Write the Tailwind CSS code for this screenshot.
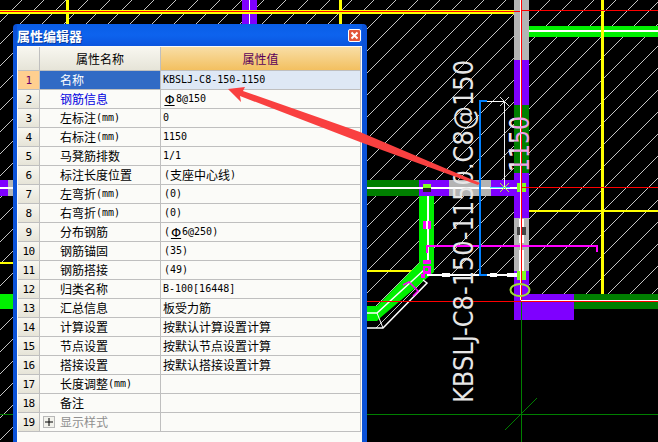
<!DOCTYPE html>
<html lang="zh-CN">
<head>
  <meta charset="UTF-8">
  <title>属性编辑器</title>
  <script src="https://cdn.jsdelivr.net/npm/@tailwindcss/browser@4"></script>
</head>
<body class="bg-black overflow-hidden">
<div class="relative w-[658px] h-[442px] overflow-hidden bg-black">

  <!-- cad drawing -->
  <svg class="absolute inset-0" width="658" height="442" viewBox="0 0 658 442">
    <defs>
      <pattern id="hatch" width="22" height="22" patternUnits="userSpaceOnUse">
        <path d="M-2 24 L24 -2" stroke="#c4c4c4" stroke-width="1" fill="none" shape-rendering="crispEdges"/>
      </pattern>
      <clipPath id="overBlack"><rect x="500" y="100" width="14" height="90"/></clipPath>
    </defs>
    <rect width="658" height="442" fill="#000"/>
    <rect width="658" height="442" fill="url(#hatch)"/>
    <polygon points="367,328 383,328 427,283 427,275 514,275 514,300 658,300 658,442 367,442" fill="#000"/>

    <!-- top left column behind dialog -->
    <rect x="242" y="0" width="15" height="24" fill="#7f00ff"/>
    <rect x="249" y="0" width="1" height="24" fill="#fff"/>
    <rect x="66" y="0" width="3" height="24" fill="#ff0"/>
    <rect x="339" y="0" width="3" height="24" fill="#ff0"/>

    <!-- left strip -->
    <rect x="0" y="180" width="13" height="16" fill="#7f00ff"/>
    <rect x="8" y="180" width="5" height="16" fill="#b4b4b4"/>
    <rect x="0" y="187" width="13" height="2" fill="#fff"/>
    <rect x="0" y="262" width="13" height="2" fill="#ff0"/>
    <rect x="0" y="294" width="13" height="15" fill="#00f000"/>
    <rect x="0" y="414" width="13" height="1" fill="#007f00"/>

    <!-- yellow and green grid -->
    <rect x="0" y="10" width="521" height="4" fill="#ff0"/>
    <rect x="601" y="0" width="3" height="300" fill="#ff0"/>
    <rect x="522" y="210" width="136" height="2" fill="#ff0"/>
    <rect x="367" y="270" width="54" height="2" fill="#ff0"/>
    <rect x="522" y="26" width="136" height="11" fill="#00f000"/>
    <rect x="522" y="30" width="136" height="2" fill="#fff"/>
    <rect x="601" y="26" width="3" height="11" fill="#ff0"/>

    <!-- vertical column -->
    <rect x="514" y="0" width="15" height="60" fill="#b4b4b4"/>
    <rect x="514" y="60" width="15" height="45" fill="#7f00ff"/>
    <rect x="514" y="105" width="15" height="68" fill="#007f00"/>
    <rect x="514" y="173" width="15" height="45" fill="#7f00ff"/>
    <rect x="514" y="218" width="15" height="53" fill="#b4b4b4"/>
    <rect x="514" y="271" width="15" height="23" fill="#7f00ff"/>
    <rect x="519" y="219" width="5" height="24" fill="#fff"/>
    <rect x="519" y="250" width="5" height="21" fill="#fff"/>
    <rect x="517" y="227" width="9" height="8" fill="#444"/>

    <!-- horizontal beam -->
    <rect x="367" y="180" width="52" height="16" fill="#007f00"/>
    <rect x="419" y="180" width="30" height="16" fill="#7f00ff"/>
    <rect x="449" y="180" width="42" height="16" fill="#b4b4b4"/>
    <rect x="491" y="180" width="23" height="16" fill="#7f00ff"/>
    <rect x="367" y="187" width="150" height="2" fill="#fff"/>
    <rect x="490" y="187" width="20" height="1" fill="#40e0ff"/>

    <!-- bottom beams -->
    <rect x="514" y="294" width="60" height="26" fill="#7f00ff"/>
    <rect x="574" y="294" width="84" height="15" fill="#007f00"/>
    <rect x="521" y="300" width="137" height="1" fill="#fff"/>

    <!-- bright green wall and diagonal -->
    <rect x="419" y="196" width="15" height="66" fill="#00f000"/>
    <rect x="427" y="196" width="2" height="76" fill="#fff"/>
    <polygon points="421,261 434,261 434,272 380,318 377,321 367,321 367,306 377,306" fill="#00f000"/>
    <polyline points="367,313 377,313 424,270" fill="none" stroke="#fff" stroke-width="1.5"/>
    <polyline points="367,328 383,328 427,283 423,280" fill="none" stroke="#fff" stroke-width="1.5"/>
    <line x1="377" y1="313" x2="383" y2="328" stroke="#fff"/>
    <polyline points="403,285 409,282 418,291 413,296" fill="none" stroke="#ff00ff" stroke-width="1.5"/>

    <!-- knots -->
    <rect x="423" y="184" width="8" height="4" fill="#7fff20"/>
    <rect x="423" y="188" width="8" height="4" fill="#222"/>
    <rect x="423" y="221" width="8" height="8" fill="#ff00ff"/>
    <rect x="426" y="221" width="2" height="8" fill="#fff"/>
    <rect x="423" y="260" width="8" height="4" fill="#ff00ff"/>
    <rect x="423" y="266" width="8" height="8" fill="#ff00ff"/>
    <rect x="425" y="268" width="3" height="3" fill="#00f000"/>
    <rect x="421" y="274" width="4" height="4" fill="#ff00ff"/>
    <rect x="517" y="183" width="9" height="9" fill="#7fff20"/>
    <rect x="517" y="271" width="9" height="9" fill="#7fff20"/>

    <!-- dimension and lines -->
    <polyline points="427,253 427,246 597,246 597,252" fill="none" stroke="#ff00ff" stroke-width="2"/>
    <rect x="427" y="274" width="90" height="2" fill="#fff"/>
    <rect x="442" y="273" width="8" height="4" fill="#fff"/>
    <rect x="490" y="273" width="7" height="4" fill="#fff"/>
    <rect x="507" y="273" width="10" height="4" fill="#fff"/>
    <rect x="479" y="100" width="2" height="175" fill="#0080ff"/>
    <rect x="479" y="100" width="8" height="2" fill="#0080ff"/>
    <rect x="479" y="274" width="8" height="2" fill="#0080ff"/>
    <rect x="487" y="101" width="18" height="1" fill="#fff"/>
    <rect x="504" y="101" width="1" height="86" fill="#f0f0f0"/>
    <path d="M500 97 L509 106 M509 97 L500 106" stroke="#e0e0e0"/>
    <path d="M500 183 L509 192 M509 183 L500 192" stroke="#b0ff30"/>

    <!-- reds and axis -->
    <rect x="0" y="11" width="521" height="1" fill="#f00"/>
    <rect x="521" y="10" width="137" height="1" fill="#f00"/>
    <rect x="520" y="0" width="1" height="300" fill="#fff"/>
    <rect x="521" y="0" width="1" height="300" fill="#f00"/>
    <rect x="522" y="187" width="136" height="1" fill="#f00"/>
    <rect x="367" y="301" width="291" height="1" fill="#f00"/>
    <rect x="521" y="302" width="1" height="140" fill="#007f00"/>
    <rect x="367" y="414" width="291" height="1" fill="#007f00"/>
    <line x1="505" y1="430" x2="537" y2="398" stroke="#007f00"/>
    <ellipse cx="520" cy="290" rx="9.5" ry="6" fill="none" stroke="#a0e030" stroke-width="2"/>

    <!-- rotated labels -->
    <text transform="translate(473 403) rotate(-90)" textLength="343" lengthAdjust="spacingAndGlyphs" font-family="DejaVu Sans, sans-serif" font-size="27" fill="#e6e6e6">KBSLJ-C8-150-1150.C8@150</text>
    <text transform="translate(529 172) rotate(-90)" textLength="56" lengthAdjust="spacingAndGlyphs" font-family="DejaVu Sans, sans-serif" font-size="26" fill="#f0a0e8">1150</text>
    <g clip-path="url(#overBlack)">
      <text transform="translate(529 172) rotate(-90)" textLength="56" lengthAdjust="spacingAndGlyphs" font-family="DejaVu Sans, sans-serif" font-size="26" fill="#e6e6e6">1150</text>
    </g>
  </svg>

  <!-- property editor dialog -->
  <div class="absolute left-[13px] top-[24px] w-[354px] h-[430px] rounded-t-[4px] bg-[#0a55de] border-r-[5px] border-l-[4px] border-[#0b52d8] flex flex-col">
    <div class="h-[22px] shrink-0 flex items-center justify-between bg-[linear-gradient(#0a5ee6,#0d63ee_50%,#0a55de)] pr-[1px]">
      <span class="text-white text-[13px] font-bold leading-none font-['Noto_Sans_CJK_SC',sans-serif] [text-shadow:1px_1px_0_#0a3a9a]">属性编辑器</span>
      <span class="w-[13px] h-[13px] rounded-[2px] bg-[#e2563a] border border-white flex items-center justify-center">
        <svg width="9" height="9" viewBox="0 0 9 9"><path d="M1.5 1.5 L7.5 7.5 M7.5 1.5 L1.5 7.5" stroke="#fff" stroke-width="2"/></svg>
      </span>
    </div>
    <div class="flex-1 bg-[#fbfbf8] pt-[1px] pl-[1px] text-black text-[12px] leading-none font-['Noto_Sans_CJK_SC',sans-serif] [&_i]:not-italic [&_i]:font-['DejaVu_Sans_Mono',monospace] [&_i]:text-[10px]">
      <div class="w-[343px] h-[24px] grid grid-cols-[22px_121px_200px] [&>div]:flex [&>div]:items-center [&>div]:justify-center [&>div]:border-r [&>div]:border-b [&>div]:border-[#bfbfbf] [&>div]:bg-[linear-gradient(#f8f7f0,#e6e4d8)]">
        <div></div>
        <div>属性名称</div>
        <div class="bg-[linear-gradient(#f8dea6,#f3c060)]! text-[#5a005a]">属性值</div>
      </div>
      <div class="w-[343px] grid grid-cols-[22px_121px_200px] auto-rows-[19px] [&>div]:flex [&>div]:items-center [&>div]:overflow-hidden [&>div]:whitespace-pre [&>div]:border-r [&>div]:border-b [&>div]:border-[#bfbfbf] [&>div:nth-child(3n+1)]:justify-center [&>div:nth-child(3n+1)]:bg-[linear-gradient(#f8f7f0,#e6e4d8)] [&>div:nth-child(3n+1)]:font-['DejaVu_Sans_Mono',monospace] [&>div:nth-child(3n+1)]:text-[11px] [&>div:nth-child(3n+1)]:tracking-[-0.6px] [&>div:nth-child(3n+2)]:pl-[20px] [&>div:nth-child(3n)]:pl-[2px]">
        <div class="bg-none! bg-[#ffcf8f]! text-[#6a006a]">1</div><div class="bg-[#316ac5] text-white">名称</div><div class="bg-[#dee8f5]"><i>KBSLJ-C8-150-1150</i></div>
        <div>2</div><div class="text-[#0000e0]">钢筋信息</div><div><span class="w-[13px] text-center text-[13px] underline font-['DejaVu_Sans',sans-serif]">Φ</span><i>8@150</i></div>
        <div>3</div><div>左标注<i>(mm)</i></div><div><i>0</i></div>
        <div>4</div><div>右标注<i>(mm)</i></div><div><i>1150</i></div>
        <div>5</div><div>马凳筋排数</div><div><i>1/1</i></div>
        <div>6</div><div>标注长度位置</div><div><i class="pl-[1px]">(</i>支座中心线<i>)</i></div>
        <div>7</div><div>左弯折<i>(mm)</i></div><div><i class="pl-[1px]">(0)</i></div>
        <div>8</div><div>右弯折<i>(mm)</i></div><div><i class="pl-[1px]">(0)</i></div>
        <div>9</div><div>分布钢筋</div><div><i class="pl-[1px]">(</i><span class="w-[12px] text-center text-[13px] underline font-['DejaVu_Sans',sans-serif]">Φ</span><i>6@250)</i></div>
        <div>10</div><div>钢筋锚固</div><div><i class="pl-[1px]">(35)</i></div>
        <div>11</div><div>钢筋搭接</div><div><i class="pl-[1px]">(49)</i></div>
        <div>12</div><div>归类名称</div><div><i>B-100[16448]</i></div>
        <div>13</div><div>汇总信息</div><div>板受力筋</div>
        <div>14</div><div>计算设置</div><div>按默认计算设置计算</div>
        <div>15</div><div>节点设置</div><div>按默认节点设置计算</div>
        <div>16</div><div>搭接设置</div><div>按默认搭接设置计算</div>
        <div>17</div><div>长度调整<i>(mm)</i></div><div></div>
        <div>18</div><div>备注</div><div></div>
        <div>19</div><div class="relative text-[#8f8f8f]"><span class="absolute left-[3px] top-[3px] w-[12px] h-[12px] border border-[#b8b8b8] bg-[#f2f2ec]"><svg width="10" height="10" viewBox="0 0 10 10"><path d="M1 5 H9 M5 1 V9" stroke="#000" stroke-width="1"/></svg></span>显示样式</div><div></div>
      </div>
    </div>
  </div>

  <!-- red annotation arrow -->
  <svg class="absolute inset-0 pointer-events-none" width="658" height="442" viewBox="0 0 658 442">
    <polygon points="228,89 245,87 243,91 360,132 480,183 478,185 360,142 240,96 241,102" fill="#f94040"/>
  </svg>
</div>
</body>
</html>
